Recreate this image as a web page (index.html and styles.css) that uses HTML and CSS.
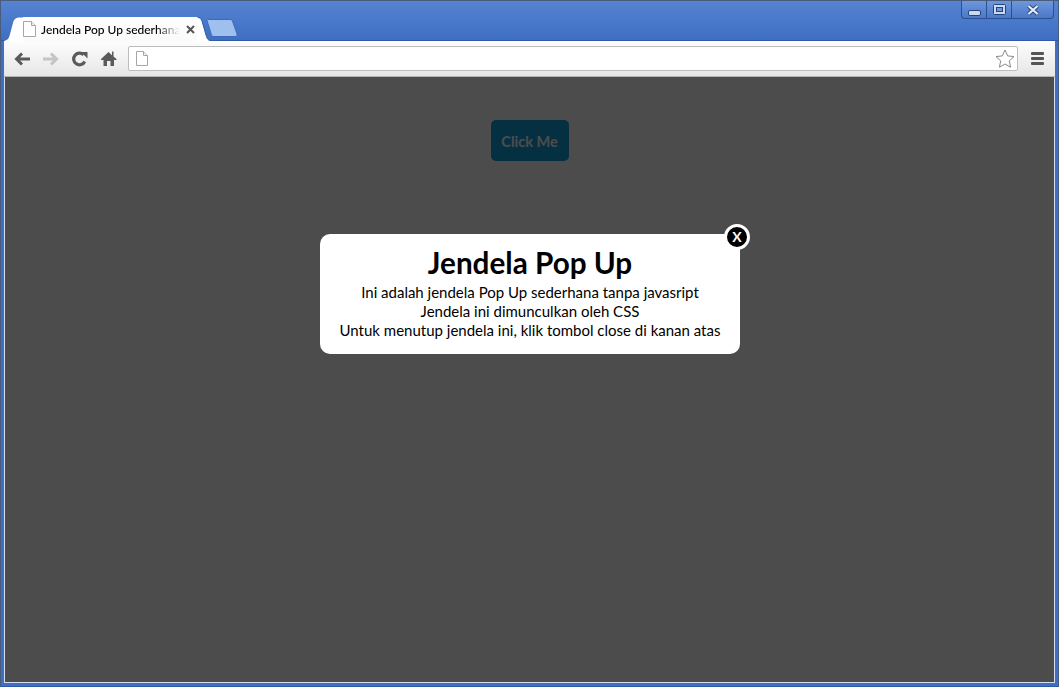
FILE: index.html
```html
<!DOCTYPE html>
<html lang="en">
<head>
    <meta charset="UTF-8">
    <title>Jendela Pop Up sederhana</title>
    <link rel="stylesheet" href="styles.css">
</head>
<body>
    <div class="window">
        <div class="titlebar">
            <div class="tab">
                <svg class="tabEdge" width="19" height="24" viewBox="0 0 19 24"><path d="M0 24C4 23 5 21 6 17L9 6C10 2 12 .5 16 .5H19V24Z" fill="#fff"/></svg>
                <div class="tabBody">
                    <svg class="pageIcon" width="13" height="16" viewBox="0 0 13 16"><path d="M.5 .5H8.500L12.500 4.500V15.500H.5Z" fill="#fff" stroke="#a6a6a6"/><path d="M8.500 .5V4.500H12.500" fill="#eee" stroke="#a6a6a6"/></svg>
                    <span class="tabTitle">Jendela Pop Up sederhana</span>
                    <svg class="tabClose" width="9" height="9" viewBox="0 0 9 9"><path d="M1 1L8 8M8 1L1 8" stroke="#555" stroke-width="2"/></svg>
                </div>
                <svg class="tabEdge" width="14" height="24" viewBox="0 0 14 24"><path d="M0 .5H1C3 .5 4 2 5 4L9 18C10 22 11 23 14 24H0Z" fill="#fff"/><path d="M1 .5C3 .5 4 2 5 4L9 18C10 22 11 23 14 24" fill="none" stroke="#2f5aa8"/></svg>
            </div>
            <svg class="newTab" width="32" height="18" viewBox="0 0 32 18"><path d="M1 1.500C1 1 1.500 .5 2 .5H24C25.500 .5 26 1 26.500 2L31 15C31.500 16.500 31 17.500 29 17.500H8C6.500 17.500 6 17 5.500 16Z" fill="#9dc0ee" stroke="#3e6ab5"/></svg>
            <div class="winControls">
                <div class="winBtn minBtn"><svg width="13" height="6" viewBox="0 0 13 6"><rect x=".5" y=".5" width="12" height="5" rx="1.500" fill="#c9d9f2" stroke="#24447c"/></svg></div>
                <div class="winBtn maxBtn"><svg width="13" height="11" viewBox="0 0 13 11"><rect x=".5" y=".5" width="12" height="10" rx="1" fill="#c9d9f2" stroke="#24447c"/><rect x="3.500" y="3.500" width="6" height="4" fill="#6f97da" stroke="#24447c"/></svg></div>
                <div class="winBtn closeBtn"><svg width="14" height="12" viewBox="0 0 14 12"><path d="M2.500 2L11.500 10M11.500 2L2.500 10" stroke="#24447c" stroke-width="4"/><path d="M2.500 2L11.500 10M11.500 2L2.500 10" stroke="#e6eefb" stroke-width="2.200"/></svg></div>
            </div>
        </div>
        <div class="toolbar">
            <div class="navIcons">
                <svg width="16" height="14" viewBox="0 0 16 14"><path d="M16 7H4M8 1.500L2.500 7L8 12.500" fill="none" stroke="#5a5a5a" stroke-width="3"/></svg>
                <svg width="16" height="14" viewBox="0 0 16 14"><path d="M0 7H12M8 1.500L13.500 7L8 12.500" fill="none" stroke="#c4c4c4" stroke-width="3"/></svg>
                <svg width="16" height="16" viewBox="0 0 16 16"><path d="M12.700 10.500A5.800 5.800 0 1 1 11.500 3.800" fill="none" stroke="#5a5a5a" stroke-width="3.200"/><path d="M9 1H15.500V7.500Z" fill="#5a5a5a"/></svg>
                <svg width="16" height="15" viewBox="0 0 16 15"><path d="M0 8L7.500 1L11 4.200V.5H12.500V5.600L15.500 8V9H13V15H9.500V10H6V15H2.500V9H0Z" fill="#5a5a5a"/></svg>
            </div>
            <div class="addressBar">
                <svg width="12" height="15" viewBox="0 0 12 15"><path d="M.5 .5H7.500L11.500 4.500V14.500H.5Z" fill="#fff" stroke="#a6a6a6"/><path d="M7.500 .5V4.500H11.500" fill="#eee" stroke="#a6a6a6"/></svg>
                <svg class="star" width="20" height="19" viewBox="0 0 20 19"><path d="M10 1L12.700 6.900L19 7.600L14.300 11.900L15.600 18.200L10 15L4.400 18.200L5.700 11.900L1 7.600L7.300 6.900Z" fill="#fff" stroke="#8a8a8a"/></svg>
            </div>
            <div class="menuIcon"><span></span><span></span><span></span></div>
        </div>
        <div class="viewport">
            <button class="clickBtn">Click Me</button>
            <div class="overlay"></div>
            <div class="popup">
                <h1>Jendela Pop Up</h1>
                <p>Ini adalah jendela Pop Up sederhana tanpa javasript</p>
                <p>Jendela ini dimunculkan oleh CSS</p>
                <p>Untuk menutup jendela ini, klik tombol close di kanan atas</p>
                <a class="closePopup">X</a>
            </div>
        </div>
    </div>
</body>
</html>
```

FILE: styles.css
```css
* {
    margin: 0;
    padding: 0;
    box-sizing: border-box;
}

html,
body {
    height: 100%;
    overflow: hidden;
}

.window {
    display: flex;
    flex-direction: column;
    height: 687px;
    padding: 0 3px 3px;
    background: #3f6fc4;
    border: 1px solid #4a5c7c;
    border-bottom-color: #2f5aa8;
    font-family: "Lato", "Liberation Sans", sans-serif;
}

/* title bar and tabs */
.titlebar {
    display: flex;
    align-items: flex-end;
    height: 40px;
    margin: 0 -3px;
    padding-left: 3px;
    background: linear-gradient(#5583d2, #3f6fc2);
    border-bottom: 1px solid #2f5aa8;
}

.tab {
    display: flex;
    height: 24px;
    margin-bottom: -1px;
    flex: none;
}

.tabEdge {
    display: block;
    flex: none;
}

.tabBody {
    display: flex;
    align-items: center;
    height: 24px;
    width: 174px;
    background: linear-gradient(#fff, #fafafa);
}

.pageIcon {
    flex: none;
}

.tabTitle {
    width: 139px;
    margin-left: 5px;
    overflow: hidden;
    white-space: nowrap;
    font-size: 12px;
    font-weight: 500;
    color: #000;
    -webkit-mask-image: linear-gradient(90deg, #000 115px, transparent 139px);
    mask-image: linear-gradient(90deg, #000 115px, transparent 139px);
}

.tabClose {
    flex: none;
    margin-left: 6px;
}

.newTab {
    margin: 0 0 3px -5px;
    flex: none;
}

.winControls {
    display: flex;
    align-self: flex-start;
    margin-left: auto;
    margin-right: 4px;
    height: 18px;
    border: 1px solid #2c4f8e;
    border-top: none;
    border-radius: 0 0 4px 4px;
    background: linear-gradient(#6f97da, #4a78c8);
}

.winBtn {
    display: flex;
    align-items: center;
    justify-content: center;
    height: 17px;
    border-right: 1px solid #2c4f8e;
}

.winBtn:last-child {
    border-right: none;
}

.minBtn {
    width: 25px;
    padding-top: 6px;
}

.maxBtn {
    width: 25px;
}

.closeBtn {
    width: 41px;
}

/* toolbar */
.toolbar {
    display: flex;
    align-items: center;
    height: 36px;
    padding: 0 11px 0 10px;
    background: linear-gradient(#fdfdfd, #e6e6e6);
    border-bottom: 1px solid #b5b5b5;
}

.navIcons {
    display: flex;
    align-items: center;
    gap: 13px;
}

.addressBar {
    display: flex;
    align-items: center;
    justify-content: space-between;
    flex: 1;
    height: 25px;
    margin: 0 13px 0 11px;
    padding: 0 2px 0 7px;
    background: #fff;
    border: 1px solid #bdbdbd;
    border-radius: 2px;
}

.menuIcon {
    display: flex;
    flex-direction: column;
    gap: 2px;
    width: 13px;
}

.menuIcon span {
    height: 3px;
    border-radius: 1px;
    background: #555;
}

/* page */
.viewport {
    flex: 1;
    position: relative;
    background: #fff;
    padding-top: 43px;
    text-align: center;
    border: 1px solid #d5deee;
    border-top: none;
}

.clickBtn {
    width: 78px;
    height: 41px;
    padding-top: 1px;
    border: none;
    border-radius: 5px;
    background: #12a0dc;
    color: #fff;
    font-family: "Lato", "Liberation Sans", sans-serif;
    font-size: 14.500px;
    font-weight: 700;
}

.overlay {
    position: absolute;
    inset: 0;
    background: rgba(0, 0, 0, 0.7);
}

.popup {
    position: absolute;
    left: 315px;
    top: 157px;
    width: 420px;
    height: 120px;
    padding-top: 13px;
    background: #fff;
    border-radius: 10px;
    color: #000;
    font-size: 15px;
    line-height: 19px;
}

.popup h1 {
    font-size: 29.700px;
    line-height: 32px;
    margin-bottom: 4px;
}

.closePopup {
    position: absolute;
    top: -10px;
    right: -10px;
    width: 26px;
    height: 26px;
    border: 3px solid #fff;
    border-radius: 50%;
    background: #000;
    color: #fff;
    font-size: 14px;
    font-weight: 700;
    line-height: 20px;
}
```
